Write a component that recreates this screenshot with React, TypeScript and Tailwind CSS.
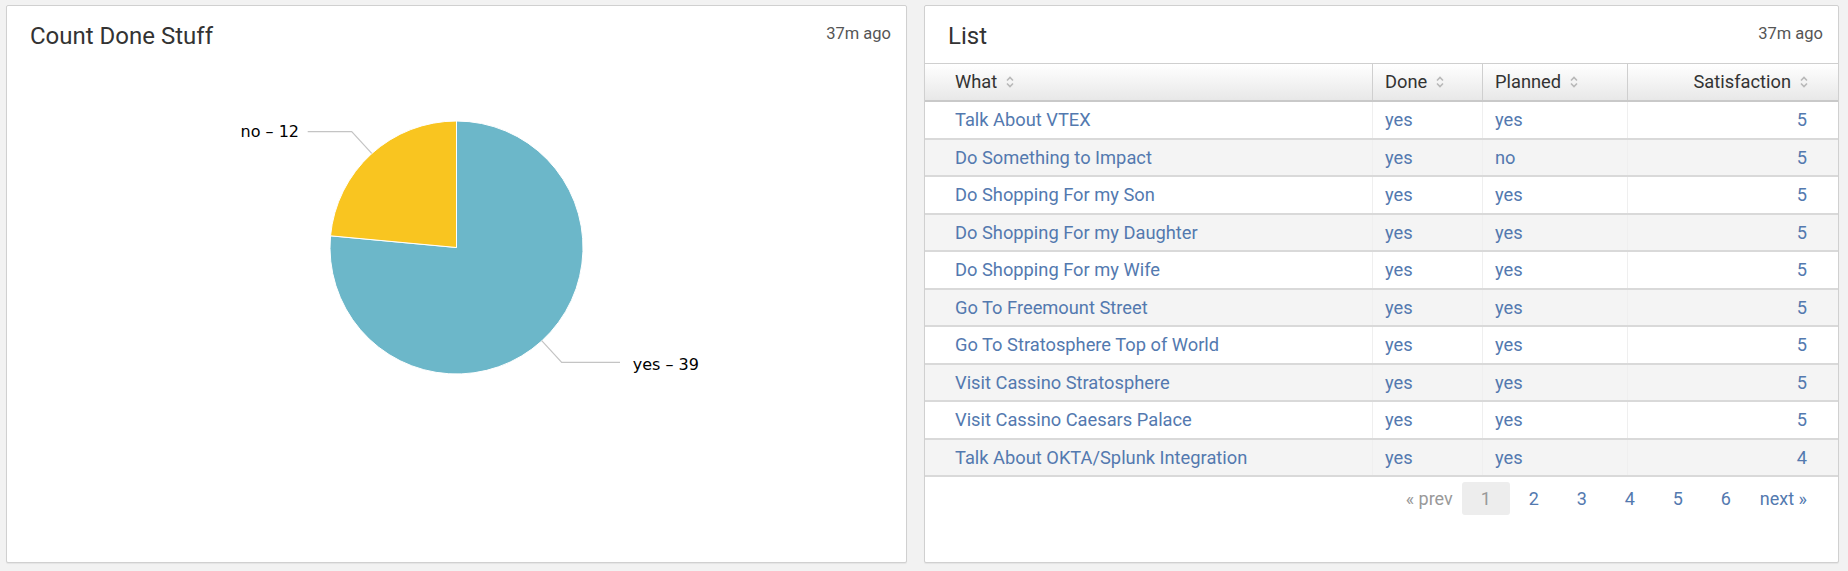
import React from 'react';

const rows: [string, string, string, string][] = [
  ['Talk About VTEX', 'yes', 'yes', '5'],
  ['Do Something to Impact', 'yes', 'no', '5'],
  ['Do Shopping For my Son', 'yes', 'yes', '5'],
  ['Do Shopping For my Daughter', 'yes', 'yes', '5'],
  ['Do Shopping For my Wife', 'yes', 'yes', '5'],
  ['Go To Freemount Street', 'yes', 'yes', '5'],
  ['Go To Stratosphere Top of World', 'yes', 'yes', '5'],
  ['Visit Cassino Stratosphere', 'yes', 'yes', '5'],
  ['Visit Cassino Caesars Palace', 'yes', 'yes', '5'],
  ['Talk About OKTA/Splunk Integration', 'yes', 'yes', '4'],
];

const SortIcon = () => (
  <svg width="8" height="14" viewBox="0 0 8 14" className="ml-[9px] shrink-0">
    <polyline points="1,5.5 4,2.5 7,5.5" fill="none" stroke="#b8b8b8" strokeWidth="1.6" />
    <polyline points="1,8.5 4,11.5 7,8.5" fill="none" stroke="#b8b8b8" strokeWidth="1.6" />
  </svg>
);

const PanelHeader = ({ title }: { title: string }) => (
  <div className="flex h-[57px] shrink-0 items-start justify-between pl-[23px] pr-[15px]">
    <h2 className="mt-[18px] text-[24px] leading-none font-normal text-[#333]">{title}</h2>
    <span className="mt-[20px] text-[16.5px] leading-none text-[#555]">37m ago</span>
  </div>
);

const PieChart = () => {
  // center/radius measured from the screenshot, in panel coordinates
  const cx = 449.5;
  const cy = 184.5;
  const r = 126.5;
  const ex = 323.54;
  const ey = 172.82;
  return (
    <svg width="899" height="499" className="block">
      <path d={`M${cx} ${cy} L${cx} ${cy - r} A${r} ${r} 0 1 1 ${ex} ${ey} Z`} fill="#6cb7c9" stroke="#fff" strokeWidth="1" />
      <path d={`M${cx} ${cy} L${cx} ${cy - r} A${r} ${r} 0 0 0 ${ex} ${ey} Z`} fill="#f9c520" stroke="#fff" strokeWidth="1" />
      <polyline points="300.7,68.7 344.7,68.7 364.7,90.3" fill="none" stroke="#c4c4c4" strokeWidth="1.2" />
      <polyline points="534.7,277.7 554.7,299.3 613,299.3" fill="none" stroke="#c4c4c4" strokeWidth="1.2" />
      <text x="292" y="73.7" textAnchor="end" fontSize="16" fill="#000" fontFamily="'DejaVu Sans', sans-serif">no – 12</text>
      <text x="625.7" y="307" fontSize="16" fill="#000" fontFamily="'DejaVu Sans', sans-serif">yes – 39</text>
    </svg>
  );
};

export default function App() {
  return (
    <div className="flex h-[571px] w-[1848px] gap-[17px] bg-[#f2f2f2] pl-[6px] pt-[5px] font-['Roboto',sans-serif]">
      <section className="flex h-[558px] w-[901px] flex-col rounded-[2px] border border-[#d0d0d0] bg-white shadow-[0_1px_1px_rgba(0,0,0,0.06)]">
        <PanelHeader title="Count Done Stuff" />
        <PieChart />
      </section>

      <section className="flex h-[558px] w-[915px] flex-col rounded-[2px] border border-[#d0d0d0] bg-white shadow-[0_1px_1px_rgba(0,0,0,0.06)]">
        <PanelHeader title="List" />

        <div className="grid h-[39px] grid-cols-[448px_110px_145px_210px] border-t border-b-2 border-t-[#cfcfcf] border-b-[#c9c9c9] bg-linear-to-b from-white to-[#e8e8e8] text-[18.3px] text-[#333]">
          <div className="flex items-center border-r border-[#cfcfcf] pl-[30px]">What<SortIcon /></div>
          <div className="flex items-center border-r border-[#cfcfcf] pl-[12px]">Done<SortIcon /></div>
          <div className="flex items-center border-r border-[#cfcfcf] pl-[12px]">Planned<SortIcon /></div>
          <div className="flex items-center justify-end pr-[30px]">Satisfaction<SortIcon /></div>
        </div>

        {rows.map(([what, done, planned, sat], i) => (
          <div
            key={what}
            className={`grid h-[37.5px] grid-cols-[448px_110px_145px_210px] border-b-2 border-[#d9d9d9] text-[18.3px] text-[#5379af] ${i % 2 === 1 ? 'bg-[#f4f4f4]' : 'bg-white'}`}
          >
            <div className="flex items-center border-r border-[#efefef] pl-[30px]">{what}</div>
            <div className="flex items-center border-r border-[#efefef] pl-[12px]">{done}</div>
            <div className="flex items-center border-r border-[#efefef] pl-[12px]">{planned}</div>
            <div className="flex items-center justify-end pr-[31px]">{sat}</div>
          </div>
        ))}

        <div className="mt-[5px] flex justify-end pr-[21px] text-[18px]">
          <span className="flex h-[33px] items-center px-[9px] text-[#999]">« prev</span>
          <span className="flex h-[33px] w-[48px] items-center justify-center rounded-[3px] bg-[#ededed] text-[#999]">1</span>
          {['2', '3', '4', '5', '6'].map((p) => (
            <span key={p} className="flex h-[33px] w-[48px] items-center justify-center text-[#5379af]">{p}</span>
          ))}
          <span className="flex h-[33px] items-center px-[10px] text-[#5379af]">next »</span>
        </div>
      </section>
    </div>
  );
}
